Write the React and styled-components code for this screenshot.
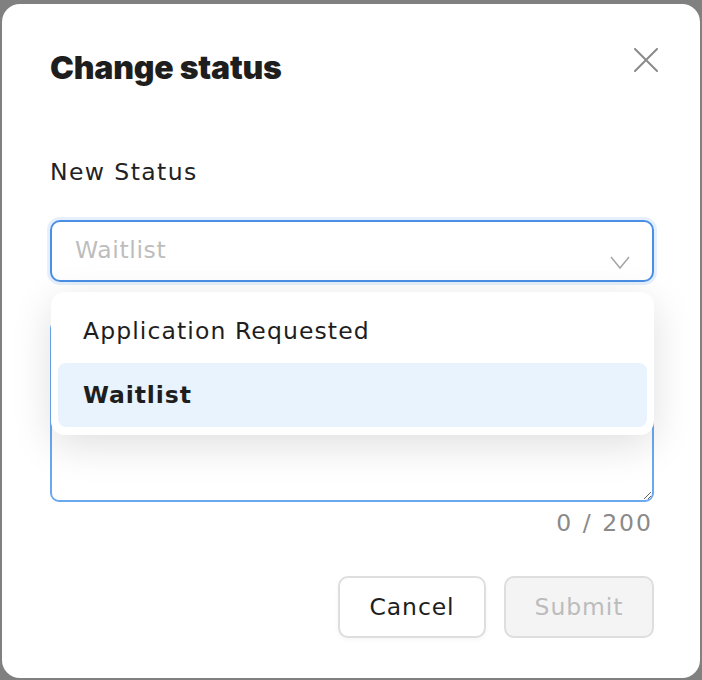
import styled, { createGlobalStyle } from "styled-components"
import { useState } from "react"

const GlobalStyle = createGlobalStyle`
  html, body {
    margin: 0;
    padding: 0;
    background: #808080;
    font-family: "DejaVu Sans", "Noto Sans", sans-serif;
  }
  * { box-sizing: border-box; }
`

const Backdrop = styled.div`
  width: 702px;
  height: 680px;
  padding: 4px 2px 2px 2px;
  background: #808080;
`

const Modal = styled.div`
  width: 698px;
  height: 674px;
  background: #fff;
  border-radius: 18px;
  padding: 44px 46px 0 48px;
  display: flex;
  flex-direction: column;
`

const Header = styled.div`
  display: flex;
  justify-content: space-between;
  align-items: flex-start;
  height: 40px;
`

const Title = styled.h1`
  margin: 0;
  font-family: "Inter", sans-serif;
  font-size: 32px;
  line-height: 40px;
  font-weight: 900;
  color: #1e1e1e;
  letter-spacing: -0.2px;
`

const CloseButton = styled.button`
  border: none;
  background: none;
  padding: 0;
  margin: 0 -4px 0 0;
  width: 24px;
  height: 24px;
  cursor: pointer;
  display: flex;
`

const Label = styled.div`
  margin-top: 70px;
  font-size: 23.5px;
  line-height: 28px;
  color: #222;
  letter-spacing: 1.4px;
`

const Field = styled.div`
  position: relative;
  margin-top: 34px;
`

const SelectTrigger = styled.div`
  height: 62px;
  border: 2px solid #4a8fe6;
  border-radius: 10px;
  box-shadow: 0 0 0 3px #e6f0fc;
  padding: 0 22px 0 23px;
  display: flex;
  align-items: center;
  justify-content: space-between;
`

const Placeholder = styled.span`
  font-size: 23.5px;
  color: #bdbdbd;
  letter-spacing: 0.6px;
  margin-top: -2px;
`

const Chevron = styled.svg`
  margin-top: 22px;
`

const Menu = styled.div`
  position: absolute;
  top: 72px;
  left: 1px;
  right: 0;
  background: #fff;
  border-radius: 14px;
  padding: 7px 7px 8px 7px;
  box-shadow: 0 10px 40px rgba(0, 0, 0, 0.13);
  z-index: 2;
`

const Option = styled.div`
  height: 64px;
  display: flex;
  align-items: center;
  padding-left: 25px;
  border-radius: 8px;
  font-size: 23.5px;
  color: #1e1e1e;
  letter-spacing: ${(p) => (p.$active ? "0.9px" : "1.1px")};
  background: ${(p) => (p.$active ? "#e8f3fd" : "transparent")};
  font-weight: ${(p) => (p.$active ? 700 : 400)};
`

const TextArea = styled.textarea`
  display: block;
  width: 100%;
  height: 182px;
  margin-top: 38px;
  border: 2px solid #6aa9f2;
  border-radius: 9px;
  resize: vertical;
  outline: none;
  font-family: inherit;
  font-size: 20px;
  padding: 14px 20px;
`

const Counter = styled.div`
  text-align: right;
  margin-top: 7px;
  padding-right: 1px;
  font-size: 23.5px;
  line-height: 28px;
  color: #8a8a8a;
  letter-spacing: 2px;
`

const Actions = styled.div`
  display: flex;
  justify-content: flex-end;
  gap: 18px;
  margin-top: 39px;
`

const Button = styled.button`
  width: ${(p) => (p.$primary ? "150px" : "148px")};
  height: 62px;
  border-radius: 10px;
  border: 2px solid #dedede;
  background: ${(p) => (p.$primary ? "#f4f4f4" : "#fff")};
  color: ${(p) => (p.$primary ? "#bcbcbc" : "#1e1e1e")};
  font-family: inherit;
  font-size: 23.5px;
  letter-spacing: 0.9px;
  cursor: ${(p) => (p.$primary ? "default" : "pointer")};
  box-shadow: ${(p) => (p.$primary ? "none" : "0 2px 4px rgba(0,0,0,0.04)")};
`

const options = ["Application Requested", "Waitlist"]

export default function App() {
  const [selected] = useState("Waitlist")
  return (
    <>
      <GlobalStyle />
      <Backdrop>
        <Modal>
          <Header>
            <Title>Change status</Title>
            <CloseButton aria-label="Close">
              <svg width="24" height="24" viewBox="0 0 24 24">
                <path d="M1 1 L23 23 M23 1 L1 23" stroke="#8a8a8a" strokeWidth="2" strokeLinecap="round" />
              </svg>
            </CloseButton>
          </Header>

          <Label>New Status</Label>

          <Field>
            <SelectTrigger>
              <Placeholder>{selected}</Placeholder>
              <Chevron width="20" height="13" viewBox="0 0 20 13">
                <path d="M1 1 L10 12 L19 1" fill="none" stroke="#a8a8a8" strokeWidth="1.6" />
              </Chevron>
            </SelectTrigger>
            <Menu>
              {options.map((o) => (
                <Option key={o} $active={o === selected}>
                  {o}
                </Option>
              ))}
            </Menu>
            <TextArea />
          </Field>

          <Counter>0 / 200</Counter>

          <Actions>
            <Button>Cancel</Button>
            <Button $primary disabled>
              Submit
            </Button>
          </Actions>
        </Modal>
      </Backdrop>
    </>
  )
}
